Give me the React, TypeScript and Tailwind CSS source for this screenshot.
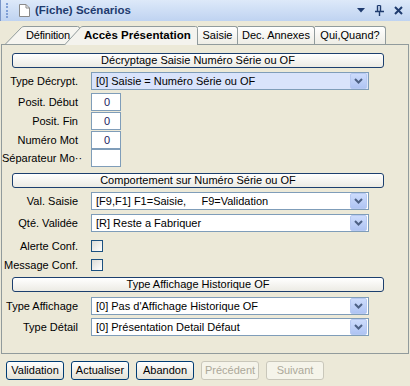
import React from "react";

const Chevron = () => (
  <div className="mr-px flex h-[16px] w-[17px] shrink-0 items-center justify-center rounded-[2px] border border-[#b7c9f2] bg-linear-to-b from-[#cddcfc] to-[#afc4f3]">
    <svg width="9" height="6" viewBox="0 0 9 6">
      <path d="M1 1 L4.5 4.5 L8 1" fill="none" stroke="#4d6185" strokeWidth="2" />
    </svg>
  </div>
);

const Select = ({ value, focused }: { value: string; focused?: boolean }) => (
  <div
    className={
      "flex h-[18px] w-[278px] items-center border border-[#7f9db9] " +
      (focused ? "bg-[#d9e3fb]" : "bg-white")
    }
  >
    <span className="flex-1 whitespace-pre pl-[4px] text-black">{value}</span>
    <Chevron />
  </div>
);

const Label = ({ text }: { text: string }) => (
  <span className="w-[76px] shrink-0 whitespace-nowrap text-right text-black">{text}</span>
);

const Section = ({ title, className }: { title: string; className: string }) => (
  <div
    className={
      "ml-[10px] flex h-[15px] w-[372px] items-center justify-center rounded-[3px] border border-[#1c3f6e] bg-linear-to-b from-white to-[#ecebe4] text-black " +
      className
    }
  >
    {title}
  </div>
);

const NumInput = ({ value }: { value: string }) => (
  <div className="ml-[13px] flex h-[18px] w-[30px] items-center border border-[#7f9db9] bg-white pl-[12px] text-[#1a1a60]">
    {value}
  </div>
);

const Check = () => (
  <div className="ml-[13px] h-[12px] w-[12px] border border-[#1c5180] bg-linear-to-br from-[#dcdcd7] to-white" />
);

const Btn = ({ text, disabled }: { text: string; disabled?: boolean }) => (
  <div
    className={
      "flex h-[19px] w-[58px] items-center justify-center rounded-[3px] border " +
      (disabled
        ? "border-[#c9c7ba] bg-[#f5f4ea] text-[#aca899]"
        : "border-[#003c74] bg-linear-to-b from-white to-[#e3e1d6] text-black")
    }
  >
    {text}
  </div>
);

const SlantTab = ({ w, active, children, className }: { w: number; active?: boolean; children: React.ReactNode; className: string }) => (
  <div className={"relative flex items-center " + className} style={{ width: w }}>
    <svg className="absolute inset-0" width={w} height={active ? 19 : 18}>
      <path
        d={`M0.5 ${active ? 19 : 18} L16.5 1.5 Q17.5 0.5 19 0.5 L${w - 2.5} 0.5 Q${w - 0.5} 0.5 ${w - 0.5} 2.5 L${w - 0.5} ${active ? 19 : 18}`}
        fill={active ? "#f4f3ee" : "#f6f5f0"}
        stroke="#919b9c"
      />
    </svg>
    <span className="relative">{children}</span>
  </div>
);

const Tab = ({ text, w }: { text: string; w: string }) => (
  <div className={"flex h-[18px] items-center justify-center rounded-tr-[3px] border-t border-r border-[#919b9c] bg-linear-to-b from-white to-[#eeede5] " + w}>
    {text}
  </div>
);

export default function App() {
  return (
    <div className="flex h-[386px] w-[410px] flex-col overflow-hidden bg-[#ece9d8] font-['Liberation_Sans',Arial,sans-serif] text-[11px] leading-none text-black">
      {/* title bar */}
      <div className="flex h-[21px] shrink-0 items-center border-l border-[#7a96c8] bg-linear-to-b from-[#dde9f9] to-[#bfd3f1] text-[#1f3b6e]">
        <div className="ml-[5px] flex h-[15px] flex-col justify-between">
          {Array.from({ length: 5 }).map((_, i) => (
            <div key={i} className="h-[2px] w-[2px] bg-[#7f9fd6]" />
          ))}
        </div>
        <svg className="ml-[11px]" width="11" height="13" viewBox="0 0 11 13">
          <path d="M0.5 0.5 H7 L10.5 4 V12.5 H0.5 Z" fill="#fff" stroke="#8a8a8a" />
          <path d="M7 0.5 V4 H10.5" fill="none" stroke="#8a8a8a" />
        </svg>
        <span className="ml-[5px] text-[11.5px] font-bold">(Fiche) Scénarios</span>
        <div className="ml-auto mr-[7px] flex items-center gap-[10px]">
          <svg width="8" height="5" viewBox="0 0 8 5">
            <path d="M0 0 H8 L4 4.5 Z" fill="#1f3b6e" />
          </svg>
          <svg width="9" height="11" viewBox="0 0 9 11">
            <path d="M2.5 0.5 V6 M5.5 0.5 V6 M0 6.5 H9 M4.5 6.5 V11" fill="none" stroke="#1f3b6e" strokeWidth="1.4" />
            <path d="M2.5 0.5 H5.5" stroke="#1f3b6e" />
          </svg>
          <svg width="9" height="9" viewBox="0 0 9 9">
            <path d="M1 1 L8 8 M8 1 L1 8" stroke="#1f3b6e" strokeWidth="2" />
          </svg>
        </div>
      </div>

      {/* tab strip */}
      <div className="mt-[5px] flex h-[18px] shrink-0 items-end pl-[5px]">
        <SlantTab w={75} className="h-[18px] pl-[21px] tracking-[-0.2px]">Définition</SlantTab>
        <SlantTab w={134} active className="z-10 -mb-px ml-[-16px] h-[19px] pl-[20px] text-[11.5px] font-bold">
          Accès Présentation
        </SlantTab>
        <Tab text="Saisie" w="w-[40px]" />
        <Tab text="Dec. Annexes" w="w-[77px]" />
        <Tab text="Qui,Quand?" w="w-[71px]" />
      </div>

      {/* panel */}
      <div className="ml-px flex h-[310px] w-[408px] shrink-0 flex-col border border-[#919b9c] bg-[#ece9d8]">
        <Section title="Décryptage Saisie Numéro Série ou OF" className="mt-[8px]" />
        <div className="mt-[4px] flex h-[18px] items-center">
          <Label text="Type Décrypt." />
          <div className="ml-[13px]">
            <Select value="[0] Saisie = Numéro Série ou OF" focused />
          </div>
        </div>
        <div className="mt-[3px] flex h-[18px] items-center">
          <Label text="Posit. Début" />
          <NumInput value="0" />
        </div>
        <div className="mt-px flex h-[18px] items-center">
          <Label text="Posit. Fin" />
          <NumInput value="0" />
        </div>
        <div className="mt-px flex h-[18px] items-center">
          <Label text="Numéro Mot" />
          <NumInput value="0" />
        </div>
        <div className="flex h-[18px] items-center">
          <Label text="Séparateur Mo··" />
          <NumInput value="" />
        </div>

        <Section title="Comportement sur Numéro Série ou OF" className="mt-[6px]" />
        <div className="mt-[4px] flex h-[18px] items-center">
          <Label text="Val. Saisie" />
          <div className="ml-[13px]">
            <Select value="[F9,F1] F1=Saisie,     F9=Validation" />
          </div>
        </div>
        <div className="mt-[4px] flex h-[18px] items-center">
          <Label text="Qté. Validée" />
          <div className="ml-[13px]">
            <Select value="[R] Reste a Fabriquer" />
          </div>
        </div>
        <div className="mt-[5px] flex h-[18px] items-center">
          <Label text="Alerte Conf." />
          <Check />
        </div>
        <div className="mt-px flex h-[18px] items-center">
          <Label text="Message Conf." />
          <Check />
        </div>

        <Section title="Type Affichage Historique OF" className="mt-[3px]" />
        <div className="mt-[5px] flex h-[18px] items-center">
          <Label text="Type Affichage" />
          <div className="ml-[13px]">
            <Select value="[0] Pas d'Affichage Historique OF" />
          </div>
        </div>
        <div className="mt-[3px] flex h-[18px] items-center">
          <Label text="Type Détail" />
          <div className="ml-[13px]">
            <Select value="[0] Présentation Detail Défaut" />
          </div>
        </div>
      </div>

      {/* buttons */}
      <div className="ml-[6px] mt-[7px] flex gap-[7px]">
        <Btn text="Validation" />
        <Btn text="Actualiser" />
        <Btn text="Abandon" />
        <Btn text="Précédent" disabled />
        <Btn text="Suivant" disabled />
      </div>
    </div>
  );
}
